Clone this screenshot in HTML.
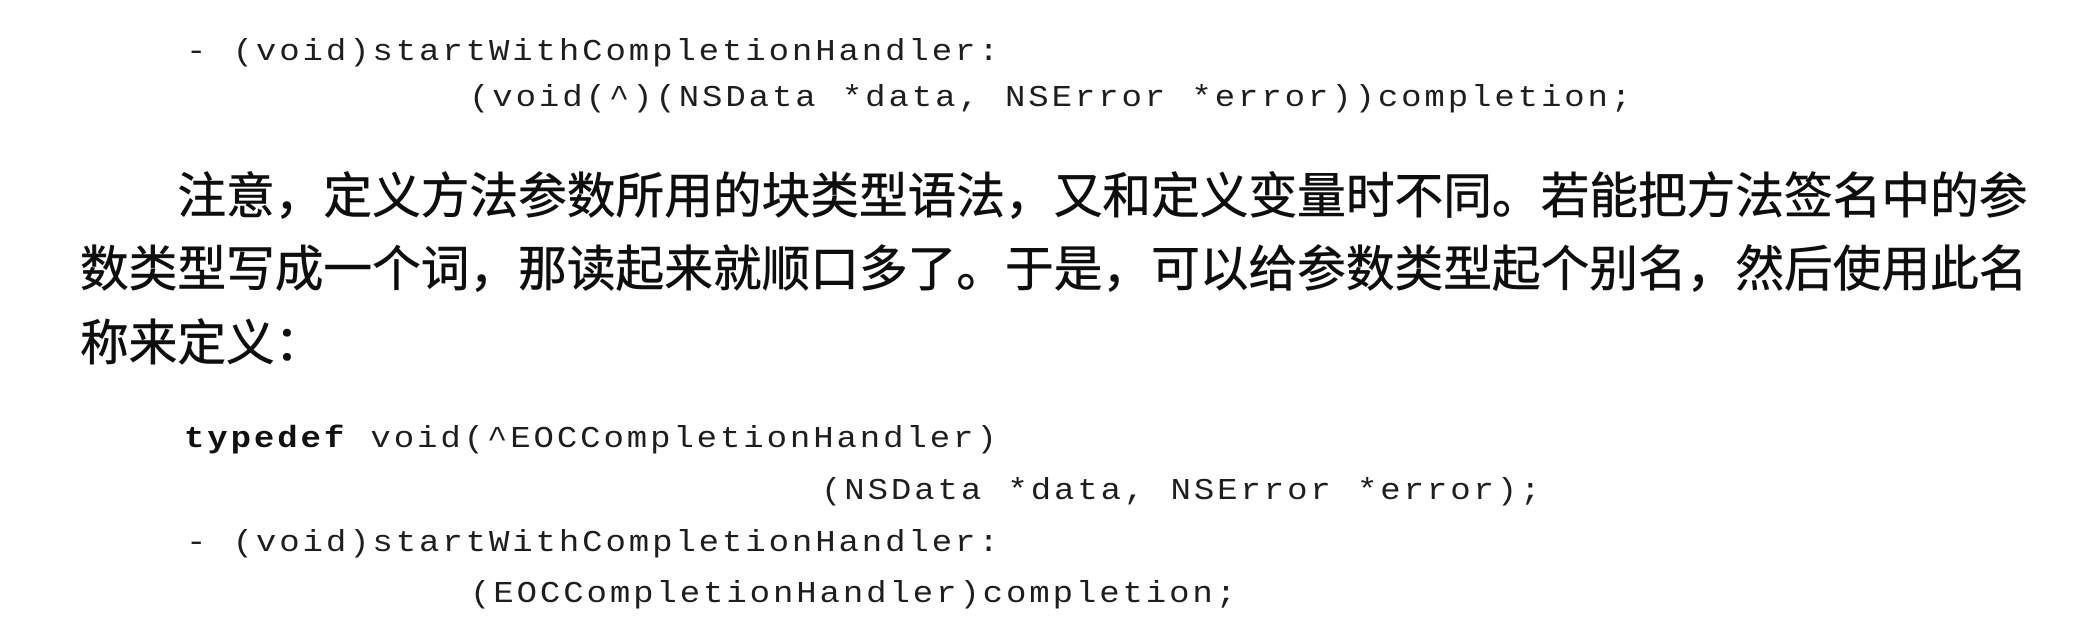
<!DOCTYPE html>
<html><head><meta charset="utf-8"><style>
html,body{margin:0;padding:0;background:#fff;}
body{width:2086px;height:634px;position:relative;overflow:hidden;}
.c{position:absolute;font-family:"Liberation Mono",monospace;font-size:34px;letter-spacing:2.9px;color:#1e1e1e;white-space:pre;line-height:40px;height:40px;transform:scaleY(0.9);transform-origin:left center;}
.c b{font-weight:bold;color:#111;}
.t{position:absolute;left:80px;font-family:"Liberation Sans","Noto Sans CJK SC",sans-serif;font-size:48.7px;font-weight:400;color:#0e0e0e;white-space:pre;line-height:60px;height:60px;-webkit-text-stroke:0.6px #0e0e0e;}
</style></head><body>
<div class="c" style="left:186px;top:33px;">- (void)startWithCompletionHandler:</div>
<div class="c" style="left:469px;top:79px;">(void(^)(NSData *data, NSError *error))completion;</div>
<div class="t" style="top:167px;">　　注意，定义方法参数所用的块类型语法，又和定义变量时不同。若能把方法签名中的参</div>
<div class="t" style="top:240px;">数类型写成一个词，那读起来就顺口多了。于是，可以给参数类型起个别名，然后使用此名</div>
<div class="t" style="top:314px;">称来定义：</div>
<div class="c" style="left:184px;top:420px;"><b>typedef</b> void(^EOCCompletionHandler)</div>
<div class="c" style="left:821px;top:472px;">(NSData *data, NSError *error);</div>
<div class="c" style="left:186px;top:524px;">- (void)startWithCompletionHandler:</div>
<div class="c" style="left:470px;top:575px;">(EOCCompletionHandler)completion;</div>
</body></html>
